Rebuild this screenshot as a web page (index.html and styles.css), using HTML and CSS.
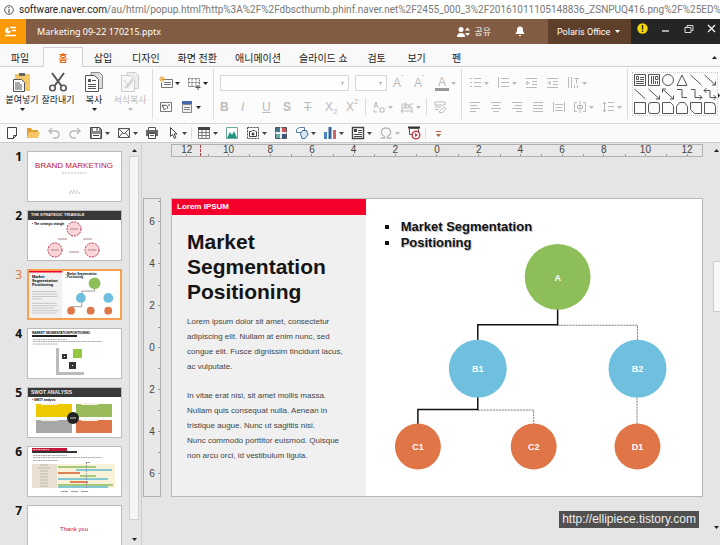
FILE: index.html
```html
<!DOCTYPE html>
<html lang="ko">
<head>
    <meta charset="UTF-8">
    <meta name="viewport" content="width=device-width, initial-scale=1.0">
    <title>Marketing 09-22 170215.pptx</title>
    <link rel="stylesheet" href="styles.css">
</head>
<body>

<svg class="defs" aria-hidden="true">
    <symbol id="caret" viewBox="0 0 5 3"><path d="M0 0h5L2.500 3z" fill="currentColor"/></symbol>

    <!-- clipboard group -->
    <symbol id="paste" viewBox="0 0 20 20"><path d="M3 2h15v17H3z" fill="#f3c768"/><path d="M7 1h6v3H7z" fill="#666"/><path d="M1.500 7.500h8l3 3v9h-11z" fill="#fff" stroke="#555"/><path d="M3 11h5M3 13h7M3 15h7M3 17h7" stroke="#555"/></symbol>
    <symbol id="cut" viewBox="0 0 20 20"><path d="M4 1l9.500 13M16 1L6.500 14" stroke="#555" stroke-width="2" fill="none"/><circle cx="4.500" cy="16" r="2.800" fill="none" stroke="#555" stroke-width="1.600"/><circle cx="15.500" cy="16" r="2.800" fill="none" stroke="#555" stroke-width="1.600"/></symbol>
    <symbol id="copy" viewBox="0 0 20 20"><path d="M7 .500h8.500l3 3v13H7z" fill="#ddd" stroke="#888"/><path d="M1.500 3.500h9l4 4v12h-13z" fill="#fff" stroke="#555"/><path d="M4 7h3v3H4z" fill="#555"/><path d="M8 8.500h4M4 12.500h8M4 14.500h8M4 16.500h8" stroke="#555"/></symbol>
    <symbol id="format-copy" viewBox="0 0 20 20"><path d="M7 .500h8.500l3 3v13H7z" fill="#eee" stroke="#ccc"/><path d="M1.500 3.500h9l4 4v12h-13z" fill="#f7f7f7" stroke="#ccc"/><path d="M4 8l5 6M12 7l-5 6-2 3 4-2 4-6z" fill="#ddd" stroke="#ccc"/></symbol>

    <!-- slide group -->
    <symbol id="new-slide" viewBox="0 0 14 14"><path d="M3.500 3.500h10v8h-11v-5" fill="none" stroke="#777"/><path d="M5 6.500h7M5 8.500h7" stroke="#777"/><path d="M3 0v6M0 3h6M1 1l4 4M5 1L1 5" stroke="#f0a830"/></symbol>
    <symbol id="layout" viewBox="0 0 14 14"><path d="M1.500 2.500h11v8h-11zM1.500 6.500h11M5 2.500v8M9 2.500v8" fill="none" stroke="#777" stroke-dasharray="2 1"/><path d="M11 9v5M8.500 11.500h5" stroke="#555"/></symbol>
    <symbol id="reset" viewBox="0 0 14 14"><path d="M1.500 2.500h11v9h-11z" fill="none" stroke="#777"/><path d="M4 4.500l-1 2 2 1M4 6c3-2 6 0 4 3M9 5h2M4 9h3" fill="none" stroke="#555"/></symbol>
    <symbol id="section" viewBox="0 0 14 14"><path d="M2 1h10v3H2z" fill="#4668a8"/><path d="M2.500 4.500h9v8h-9z" fill="#f0f0f0" stroke="#888"/><path d="M4 7.500h6M4 9.500h6" stroke="#888"/></symbol>

    <!-- shapes gallery -->
    <symbol id="g-text" viewBox="0 0 14 14"><path d="M1.500 1.500h11v11h-11zM3.500 3.500h2v3h-2zM7 4.500h4M7 6.500h4M3 8.500h8M3 10.500h8"/></symbol>
    <symbol id="g-vtext" viewBox="0 0 14 14"><path d="M1.500 1.500h11v11h-11zM4.500 3v8M6.500 3v8M8.500 8v3M8.500 3.500h2.500v3H8.500zM10.500 8v3"/></symbol>
    <symbol id="g-circle" viewBox="0 0 14 14"><circle cx="7" cy="7" r="5.500"/></symbol>
    <symbol id="g-triangle" viewBox="0 0 14 14"><path d="M7 2l5 10.500H2z"/></symbol>
    <symbol id="g-line" viewBox="0 0 14 14"><path d="M1.500 2l11 10"/></symbol>
    <symbol id="g-arrow" viewBox="0 0 14 14"><path d="M1.500 2l11 10M12.500 8.500V12H9"/></symbol>
    <symbol id="g-arrow2" viewBox="0 0 14 14"><path d="M1.500 2l11 10M12.500 8.500V12H9M1.500 5.500V2H5"/></symbol>
    <symbol id="g-elbow" viewBox="0 0 14 14"><path d="M2 2.500h5v8h5"/></symbol>
    <symbol id="g-elbow-a" viewBox="0 0 14 14"><path d="M2 2.500h4v8h7M10.500 8l2.500 2.500-2.500 2.500"/></symbol>
    <symbol id="g-elbow-b" viewBox="0 0 14 14"><path d="M1 3.500h6v7h6M10.500 8l2.500 2.500-2.500 2.500M3.500 1L1 3.500 3.500 6"/></symbol>
    <symbol id="g-rect" viewBox="0 0 14 14"><path d="M1.500 1.500h11v11h-11z"/></symbol>
    <symbol id="g-round" viewBox="0 0 14 14"><rect x="1.500" y="1.500" width="11" height="11" rx="2.500"/></symbol>
    <symbol id="g-snip" viewBox="0 0 14 14"><path d="M1.500 1.500h8l3 3v8h-11z"/></symbol>
    <symbol id="g-snip2" viewBox="0 0 14 14"><path d="M4.500 1.500h5l3 4v7h-11v-7z"/></symbol>
    <symbol id="g-snip3" viewBox="0 0 14 14"><path d="M1.500 1.500h11v11h-7l-4-4z"/></symbol>
    <symbol id="g-round1" viewBox="0 0 14 14"><path d="M1.500 1.500h7q4 0 4 4v7h-11z"/></symbol>
</svg>

<div class="address">
    <svg class="info" viewBox="0 0 10 10"><circle cx="5" cy="5" r="4.300" fill="none" stroke="#555"/><path d="M5 2v1.200M5 4.200V8" stroke="#555" stroke-width="1.200"/></svg>
    <span class="url"><b>software.naver.com</b>/au/html/popup.html?http%3A%2F%2Fdbscthumb.phinf.naver.net%2F2455_000_3%2F20161011105148836_ZSNPUQ416.png%2F%25ED%</span>
</div>

<header class="titlebar">
    <button class="app" aria-label="Menu">
        <svg width="13" height="12" viewBox="0 0 13 12"><path d="M4.500 1.500A3 3 0 1 0 7 5H4.500z" fill="#fff"/><path d="M6 1.500h6M8 4.500h4M1 9.500h11" stroke="#fff" stroke-width="1.500"/></svg>
    </button>
    <h1 class="filename">Marketing 09-22 170215.pptx</h1>
    <button class="share">
        <svg width="13" height="12" viewBox="0 0 13 12"><circle cx="4" cy="3.500" r="2.500" fill="#fff"/><path d="M0 11q0-4 4-4t4 4z" fill="#fff"/><path d="M8 4.500h5L10.500 1.500zM8 7h5l-2.500 3z" fill="#fff"/></svg>
        공유
    </button>
    <button class="bell" aria-label="Notifications">
        <svg width="10" height="11" viewBox="0 0 10 11"><path d="M5 .500c3 0 3 2.500 3 4.500l1.500 3h-9L2 5C2 3 2 .500 5 .500zM3.500 9h3L5 10.500z" fill="#fff"/></svg>
    </button>
    <button class="account">Polaris Office <svg class="caret"><use href="#caret"/></svg></button>
    <div class="window-buttons">
        <button aria-label="Alert"><svg width="11" height="11" viewBox="0 0 11 11"><circle cx="5.500" cy="5.500" r="5.200" fill="#f5d800"/><path d="M5.500 2v4.500M5.500 7.500V9" stroke="#222" stroke-width="1.400"/></svg></button>
        <button aria-label="Minimize"><svg width="11" height="11" viewBox="0 0 11 11"><path d="M2 8h7" stroke="#fff" stroke-width="1.200"/></svg></button>
        <button aria-label="Restore"><svg width="11" height="11" viewBox="0 0 11 11"><path d="M2 4.500h6v5H2zM4 4V2.500h6v5H8.500" stroke="#ddd" fill="none"/></svg></button>
        <button aria-label="Close"><svg width="11" height="11" viewBox="0 0 11 11"><path d="M2 2l7 7M9 2L2 9" stroke="#fff" stroke-width="1.200"/></svg></button>
    </div>
</header>

<nav class="tabs">
    <button>파일</button>
    <button class="active">홈</button>
    <button>삽입</button>
    <button>디자인</button>
    <button>화면 전환</button>
    <button>애니메이션</button>
    <button>슬라이드 쇼</button>
    <button>검토</button>
    <button>보기</button>
    <button>펜</button>
    <button class="collapse" aria-label="Collapse"><svg class="caret up"><use href="#caret"/></svg></button>
</nav>

<section class="ribbon">
    <div class="group clipboard">
        <button class="big"><svg><use href="#paste"/></svg><span>붙여넣기</span><svg class="caret"><use href="#caret"/></svg></button>
        <button class="big"><svg><use href="#cut"/></svg><span>잘라내기</span></button>
        <button class="big"><svg><use href="#copy"/></svg><span>복사</span><svg class="caret"><use href="#caret"/></svg></button>
        <button class="big" disabled><svg><use href="#format-copy"/></svg><span>서식복사</span><svg class="caret"><use href="#caret"/></svg></button>
    </div>

    <div class="group">
        <div class="row">
            <button class="tool split" aria-label="New slide"><svg><use href="#new-slide"/></svg><svg class="caret"><use href="#caret"/></svg></button>
            <button class="tool split" aria-label="Layout"><svg><use href="#layout"/></svg><svg class="caret"><use href="#caret"/></svg></button>
        </div>
        <div class="row">
            <button class="tool" aria-label="Reset"><svg><use href="#reset"/></svg></button>
            <button class="tool split" aria-label="Section"><svg><use href="#section"/></svg><svg class="caret"><use href="#caret"/></svg></button>
        </div>
    </div>

    <div class="group font">
        <div class="row">
            <select class="font-name" aria-label="Font" disabled></select>
            <select class="font-size" aria-label="Font size" disabled></select>
            <button class="tool" disabled>A<sup>ˆ</sup></button>
            <button class="tool" disabled>A<sup>ˇ</sup></button>
            <button class="tool split" disabled><span class="font-color">A</span><svg class="caret"><use href="#caret"/></svg></button>
        </div>
        <div class="row">
            <button class="tool" disabled><b>B</b></button>
            <button class="tool" disabled><i>I</i></button>
            <button class="tool" disabled><u>U</u></button>
            <button class="tool" disabled><b>S</b></button>
            <button class="tool" disabled><s>T</s></button>
            <button class="tool" disabled>X<sub>2</sub></button>
            <button class="tool" disabled>X<sup>2</sup></button>
            <span class="divider"></span>
            <button class="tool split" aria-label="Text direction" disabled><svg viewBox="0 0 14 14"><path d="M2 8l2-6 2 6M3 6h2M8 8v4h4V8zM2 10v2h3" fill="none" stroke="currentColor"/></svg><svg class="caret"><use href="#caret"/></svg></button>
            <button class="tool split" aria-label="Spacing" disabled><svg viewBox="0 0 14 14"><path d="M2 4h3v4H2zM6 2v6h3V5H6M13 4h-3v4h3M1 11h12M3 9l-2 2 2 2M11 9l2 2-2 2" fill="none" stroke="currentColor"/></svg><svg class="caret"><use href="#caret"/></svg></button>
            <span class="divider"></span>
            <button class="tool" aria-label="Clear format" disabled><svg viewBox="0 0 14 14"><path d="M2 2h10v3H2zM2 7h6M2 9.500h4M6 12l5-5 2 2-4 4z" fill="none" stroke="currentColor"/></svg></button>
        </div>
    </div>

    <div class="group">
        <div class="row">
            <button class="tool split" aria-label="Bullets" disabled><svg viewBox="0 0 14 14"><path d="M2 2.500h2M2 6.500h2M2 10.500h2M6 2.500h7M6 6.500h7M6 10.500h7" stroke="currentColor"/></svg><svg class="caret"><use href="#caret"/></svg></button>
            <button class="tool split" aria-label="Numbering" disabled><svg viewBox="0 0 14 14"><path d="M2.500 1v11M5 2.500h8M5 6.500h8M5 10.500h8" stroke="currentColor"/></svg><svg class="caret"><use href="#caret"/></svg></button>
            <button class="tool" aria-label="Outdent" disabled><svg viewBox="0 0 14 14"><path d="M2 2.500h11M8 5.500h5M8 8.500h5M2 11.500h11M6 7H2l2-2M2 7l2 2" fill="none" stroke="currentColor"/></svg></button>
            <button class="tool" aria-label="Indent" disabled><svg viewBox="0 0 14 14"><path d="M2 2.500h11M8 5.500h5M8 8.500h5M2 11.500h11M2 7h4L4 5M6 7L4 9" fill="none" stroke="currentColor"/></svg></button>
            <button class="tool split" aria-label="Vertical text" disabled><svg viewBox="0 0 14 14"><path d="M2.500 1v11M5.500 1v11M8 2.500h5M10.500 2.500v5M8.500 9v3M11.500 9v3" stroke="currentColor"/></svg><svg class="caret"><use href="#caret"/></svg></button>
        </div>
        <div class="row">
            <button class="tool" aria-label="Align left" disabled><svg viewBox="0 0 14 14"><path d="M2 2.500h10M2 5.500h7M2 8.500h10M2 11.500h6" stroke="currentColor"/></svg></button>
            <button class="tool" aria-label="Align center" disabled><svg viewBox="0 0 14 14"><path d="M2 2.500h10M4 5.500h6M2 8.500h10M4 11.500h6" stroke="currentColor"/></svg></button>
            <button class="tool" aria-label="Align right" disabled><svg viewBox="0 0 14 14"><path d="M2 2.500h10M5 5.500h7M2 8.500h10M6 11.500h6" stroke="currentColor"/></svg></button>
            <button class="tool" aria-label="Justify" disabled><svg viewBox="0 0 14 14"><path d="M2 2.500h10M2 5.500h10M2 8.500h10M2 11.500h10" stroke="currentColor"/></svg></button>
            <button class="tool" aria-label="Distribute" disabled><svg viewBox="0 0 14 14"><path d="M1.500 2v10M12.500 2v10M3 4.500h8M3 10.500h8M4 7.500h6" stroke="currentColor"/></svg></button>
            <button class="tool split" aria-label="Text box align" disabled><svg viewBox="0 0 14 14"><path d="M4 2.500H1.500v9H4M10 2.500h2.500v9H10M7 1v12M4.500 5.500h5v3h-5z" fill="none" stroke="currentColor"/></svg><svg class="caret"><use href="#caret"/></svg></button>
            <button class="tool split" aria-label="Line spacing" disabled><svg viewBox="0 0 14 14"><path d="M3.500 2v10M2 4l1.500-2L5 4M2 10l1.500 2L5 10M7 2.500h6M7 6.500h6M7 10.500h6" fill="none" stroke="currentColor"/></svg><svg class="caret"><use href="#caret"/></svg></button>
        </div>
    </div>

    <div class="gallery">
        <svg><use href="#g-text"/></svg><svg><use href="#g-vtext"/></svg><svg><use href="#g-circle"/></svg><svg><use href="#g-triangle"/></svg><svg><use href="#g-line"/></svg><svg><use href="#g-arrow"/></svg>
        <svg><use href="#g-line"/></svg><svg><use href="#g-arrow"/></svg><svg><use href="#g-arrow2"/></svg><svg><use href="#g-elbow"/></svg><svg><use href="#g-elbow-a"/></svg><svg><use href="#g-elbow-b"/></svg>
        <svg><use href="#g-rect"/></svg><svg><use href="#g-round"/></svg><svg><use href="#g-snip"/></svg><svg><use href="#g-snip2"/></svg><svg><use href="#g-snip3"/></svg><svg><use href="#g-round1"/></svg>
    </div>
    <button class="more" aria-label="More"><svg width="2" height="5" viewBox="0 0 2 5"><path d="M0 0v5l2-2.500z" fill="#222"/></svg></button>
</section>

<section class="quickbar">
    <button class="tool" aria-label="New"><svg viewBox="0 0 14 14"><path d="M2.500 1.500h9v8l-3 3h-6zM11.500 9.500h-3v3" fill="#fff" stroke="#444"/></svg></button>
    <button class="tool" aria-label="Open"><svg viewBox="0 0 14 14"><path d="M1 2h4l1 2h6v8H1z" fill="#e0a030"/><path d="M3 6h11l-2 6H1z" fill="#f7c566"/></svg></button>
    <button class="tool" aria-label="Undo" disabled><svg viewBox="0 0 14 14"><path d="M5 2L2 5l3 3M2 5h6q4 0 4 3.500T8 12H6" fill="none" stroke="currentColor" stroke-width="1.400"/></svg></button>
    <button class="tool" aria-label="Redo" disabled><svg viewBox="0 0 14 14"><path d="M9 2l3 3-3 3M12 5H6Q2 5 2 8.500T6 12h2" fill="none" stroke="currentColor" stroke-width="1.400"/></svg></button>
    <button class="tool split" aria-label="Save"><svg viewBox="0 0 14 14"><path d="M1.500 1.500h9l2 2v9h-11z" fill="#888" stroke="#444"/><path d="M4 2h6v3H4zM3 8h8v4H3z" fill="#fff"/><path d="M4 9.500h6M8 2v3" stroke="#444"/></svg><svg class="caret"><use href="#caret"/></svg></button>
    <button class="tool split" aria-label="Mail"><svg viewBox="0 0 14 14"><path d="M1.500 2.500h11v9h-11zM2 3l5 5 5-5M2 11l3.500-4M12 11L8.500 7" fill="none" stroke="#555"/></svg><svg class="caret"><use href="#caret"/></svg></button>
    <button class="tool" aria-label="Print"><svg viewBox="0 0 14 14"><path d="M3.500 1.500h7v3h-7z" fill="#fff" stroke="#555"/><path d="M1 4h12v6H1z" fill="#666"/><path d="M3.500 7.500h7v5h-7z" fill="#fff" stroke="#444"/><path d="M5 9.500h4" stroke="#555"/></svg></button>
    <button class="tool split" aria-label="Select"><svg viewBox="0 0 14 14"><path d="M4.500 1.500v9l2-2 2 4 1.500-1-2-3.500H11z" fill="#fff" stroke="#444"/></svg><svg class="caret"><use href="#caret"/></svg></button>
    <span class="divider"></span>
    <button class="tool split" aria-label="Table"><svg viewBox="0 0 14 14"><path d="M1.500 1.500h11v11h-11zM1.500 6.500h11M1.500 9.500h11M5 3v9M9 3v9" fill="#fff" stroke="#777"/><path d="M1 1h12v3H1z" fill="#444"/></svg><svg class="caret"><use href="#caret"/></svg></button>
    <button class="tool" aria-label="Picture"><svg viewBox="0 0 14 14"><path d="M1.500 1.500h11v11h-11z" fill="#fff" stroke="#70a8a0"/><path d="M2 12l3-6 2 3 2-4 3 7z" fill="#1f9480"/></svg></button>
    <button class="tool split" aria-label="Screenshot"><svg viewBox="0 0 14 14"><path d="M1.500 1.500h11v11h-11z" fill="none" stroke="#444" stroke-dasharray="2 1"/><path d="M3.500 5.500h2l1-1h2l1 1h1v5h-7z" fill="#fff" stroke="#444"/><circle cx="7" cy="8" r="1.500" fill="#444"/></svg><svg class="caret"><use href="#caret"/></svg></button>
    <button class="tool" aria-label="Clip art"><svg viewBox="0 0 14 14"><path d="M1.500 1.500h11v11h-11z" fill="#ddd" stroke="#555"/><path d="M2 2h4v4H2z" fill="#478"/><path d="M8 2h4v4H8z" fill="#c55"/><path d="M2 8h4v4H2z" fill="#6aa"/><path d="M8 8h4v4H8z" fill="#358"/><path d="M1 7h12M7 1v12" stroke="#fff"/></svg></button>
    <button class="tool split" aria-label="Shapes"><svg viewBox="0 0 14 14"><path d="M1.500 3.500l3-2h5v5h-8z" fill="#fff" stroke="#5680a8"/><path d="M5.500 7.500l2-3h4l1.500 4-3 4H7z" fill="#d8e8f4" stroke="#3c6c9c"/></svg><svg class="caret"><use href="#caret"/></svg></button>
    <button class="tool split" aria-label="Chart"><svg viewBox="0 0 14 14"><path d="M1 6h3v7H1z" fill="#48b"/><path d="M5.500 1h3v12h-3z" fill="#369"/><path d="M10 4h3v9h-3z" fill="#c66"/></svg><svg class="caret"><use href="#caret"/></svg></button>
    <button class="tool split" aria-label="Text box"><svg viewBox="0 0 14 14"><path d="M1.500 1.500h11v11h-11z" fill="#fff" stroke="#444" stroke-width="1.400"/><path d="M3 3h3v3H3z" fill="#444"/><path d="M7 4.500h4M7 6.500h4M3 8.500h8M3 10.500h8" stroke="#444"/></svg><svg class="caret"><use href="#caret"/></svg></button>
    <button class="tool split" aria-label="Symbol" disabled><svg viewBox="0 0 14 14"><path d="M1.500 12h4v-1.500C0 7 2.500 2 7 2s7 5 1.500 8.500V12h4" fill="none" stroke="currentColor" stroke-width="1.400"/></svg><svg class="caret"><use href="#caret"/></svg></button>
    <button class="tool" aria-label="Slide show"><svg viewBox="0 0 14 14"><path d="M1 1.500h12" stroke="#333" stroke-width="2"/><path d="M2.500 2.500h9v6h-9zM5 12l2-3" fill="#fff" stroke="#555"/><circle cx="9" cy="9" r="3.800" fill="#fff" stroke="#c23a4a" stroke-width="1.400"/><path d="M8 7l3 2-3 2z" fill="#c23a4a"/></svg></button>
    <span class="divider"></span>
    <button class="tool" aria-label="Customize"><svg viewBox="0 0 14 14"><path d="M5 5.500h5" stroke="#c55"/><path d="M5 8h5l-2.500 3z" fill="#a63"/></svg></button>
</section>

<main class="workspace">
    <aside class="slides">
        <ol class="thumbs">
            <li>
                <span>1</span>
                <svg viewBox="0 0 93 51" preserveAspectRatio="xMidYMid slice">
                    <text x="46" y="17" font-size="8" text-anchor="middle" fill="#c0143c">BRAND MARKETING</text>
                    <path d="M34 22h25M42 40h9M41 42h11" stroke="#bbb" stroke-dasharray="2 1"/>
                </svg>
            </li>
            <li>
                <span>2</span>
                <svg viewBox="0 0 93 51" preserveAspectRatio="xMidYMid slice">
                    <path d="M0 0h93v10H0z" fill="#383838"/>
                    <text x="3" y="6" font-size="4" font-weight="bold" fill="#eee">THE STRATEGIC TRIANGLE</text>
                    <text x="4" y="15" font-size="3" font-weight="bold">•  The strategic triangle</text>
                    <g fill="#fbd5d8" stroke="#b8324c" stroke-dasharray="2 1"><circle cx="46" cy="19" r="7"/><circle cx="27" cy="40" r="7"/><circle cx="64" cy="40" r="7"/></g>
                    <path d="M30 29h9M55 29h9M41 42h10M42 19h8M23 40h8M60 40h8" stroke="#a88"/>
                </svg>
            </li>
            <li class="selected">
                <span>3</span>
                <svg viewBox="0 0 93 51" preserveAspectRatio="xMidYMid slice">
                    <path d="M0 0h34v51H0z" fill="#f0f0f0"/><path d="M0 0h34v3H0z" fill="#f5002d"/>
                    <g font-size="4" font-weight="bold"><text x="3" y="9">Market</text><text x="3" y="13">Segmentation</text><text x="3" y="17">Positioning</text></g>
                    <path d="M3 22.500h25M3 25h26M3 27.500h26M3 30h10M3 34.500h25M3 37h26M3 39.500h23M3 42h27M3 44.500h25" stroke="#bbb" stroke-width=".800"/>
                    <g font-size="3" font-weight="bold"><text x="37" y="6">▪ Market Segmentation</text><text x="37" y="9">▪ Positioning</text></g>
                    <path d="M67 18v4H54v16H43v4" fill="none" stroke="#999"/>
                    <circle cx="67" cy="14" r="6" fill="#8dbe5a"/>
                    <g fill="#6ec0de"><circle cx="53" cy="29" r="5"/><circle cx="81" cy="29" r="5"/></g>
                    <g fill="#e07648"><circle cx="43" cy="42" r="4"/><circle cx="63" cy="42" r="4"/><circle cx="81" cy="42" r="4"/></g>
                </svg>
            </li>
            <li>
                <span>4</span>
                <svg viewBox="0 0 93 51" preserveAspectRatio="xMidYMid slice">
                    <text x="4" y="6" font-size="3" font-weight="bold">MARKET SEGMENTATION/POSITIONING</text>
                    <path d="M4 7h45v2H4z" fill="#222"/>
                    <path d="M5 11.500h34M5 13.500h69M5 16h25" stroke="#999" stroke-width=".800" stroke-dasharray="2 .500"/>
                    <path d="M28 20h3v24h25v3H28z" fill="#bbb"/><path d="M45 21h9v9h-9z" fill="#94c840"/><path d="M34 26h5v5h-5zM41 34h7v7h-7z" fill="#333"/><path d="M36 28.500h1M44 37.500h1" stroke="#fff"/>
                </svg>
            </li>
            <li>
                <span>5</span>
                <svg viewBox="0 0 93 51" preserveAspectRatio="xMidYMid slice">
                    <path d="M0 0h93v10H0z" fill="#383838"/>
                    <text x="3" y="7" font-size="5" font-weight="bold" fill="#eee">SWOT ANALYSIS</text>
                    <text x="4" y="14" font-size="3" font-weight="bold">•  SWOT analysis</text>
                    <path d="M8 17h36v13H8z" fill="#eec900"/><path d="M48 17h36v13H48z" fill="#9abb59"/><path d="M8 33h36v13H8z" fill="#a5a7a9"/><path d="M48 33h36v13H48z" fill="#de7548"/>
                    <path d="M13 16h17v2H13zM53 16h17v2H53zM13 32h17v2H13zM53 32h17v2H53z" fill="#f5f0e4"/>
                    <circle cx="45" cy="31" r="6" fill="#222"/><path d="M42 31h6" stroke="#ccc"/>
                </svg>
            </li>
            <li>
                <span>6</span>
                <svg viewBox="0 0 93 51" preserveAspectRatio="xMidYMid slice">
                    <path d="M4 2h35v3H4z" fill="#c4163c"/><path d="M4 5h45v2H4z" fill="#333"/><path d="M5 3.500h16" stroke="#eaa" stroke-dasharray="2 .500"/>
                    <path d="M5 9.500h34M5 11.500h69M5 14.500h25" stroke="#999" stroke-width=".800" stroke-dasharray="2 .500"/>
                    <path d="M4 18h25v24H4z" fill="#e9e0d2"/><path d="M29 18h58v24H29z" fill="#f8f2d8"/>
                    <path d="M12 19h8M10 22h12M12 25h8M12 28h8M12 31h8M12 34h8M12 37h8M12 40h8" stroke="#bba"/>
                    <path d="M30 21h38M52 30h16M30 39h55" stroke="#a5c979" stroke-width="2"/>
                    <path d="M48 24h36M30 33h50M30 41h50" stroke="#85c8d4" stroke-width="2"/>
                    <path d="M30 27h22M42 36h18" stroke="#de8058" stroke-width="2"/>
                    <path d="M33 45.500h7M43 45.500h7M53 45.500h7M58 16.500h4" stroke="#a99"/><path d="M58.500 17v25" stroke="#889" stroke-dasharray="1 1"/>
                </svg>
            </li>
            <li>
                <span>7</span>
                <svg viewBox="0 0 93 51" preserveAspectRatio="xMidYMid slice"><text x="46" y="26" font-size="6" text-anchor="middle" fill="#c0143c">Thank you</text></svg>
            </li>
        </ol>
        <div class="scrollbar">
            <svg class="caret up"><use href="#caret"/></svg>
            <div class="handle"></div>
            <svg class="caret"><use href="#caret"/></svg>
        </div>
    </aside>

    <div class="editor">
        <div class="ruler horizontal">
            <span>12</span><span>10</span><span>8</span><span>6</span><span>4</span><span>2</span><span>0</span><span>2</span><span>4</span><span>6</span><span>8</span><span>10</span><span>12</span>
            <i class="marker"></i>
        </div>
        <div class="ruler vertical">
            <span>6</span><span>4</span><span>2</span><span>0</span><span>2</span><span>4</span><span>6</span>
        </div>
        <article class="slide">
            <div class="slide-text">
                <div class="strip">Lorem IPSUM</div>
                <h2>Market Segmentation Positioning</h2>
                <p>Lorem ipsum dolor sit amet, consectetur<br>adipiscing elit. Nullam at enim nunc, sed<br>congue elit. Fusce dignissim tincidunt lacus,<br>ac vulputate.</p>
                <p>In vitae erat nisi, sit amet mollis massa.<br>Nullam quis consequat nulla. Aenean in<br>tristique augue. Nunc ut sagittis nisi.<br>Nunc commodo porttitor euismod. Quisque<br>non arcu orci, id vestibulum ligula.</p>
            </div>
            <div class="slide-diagram">
                <svg class="diagram" viewBox="0 0 337 299">
                    <g fill="none" stroke="#777" stroke-dasharray="2 1">
                        <path d="M192 126.500h80v16M112 211.500h56v15M271.500 196v30"/>
                    </g>
                    <g fill="none" stroke="#111" stroke-width="1.500">
                        <path d="M192 110v16h-80v18M112 197v14H52v16"/>
                    </g>
                    <circle cx="192" cy="78" r="33" fill="#8dbe5a"/>
                    <circle cx="112" cy="170" r="29" fill="#6ec0de"/>
                    <circle cx="272" cy="170" r="29" fill="#6ec0de"/>
                    <circle cx="52" cy="248" r="23" fill="#e07648"/>
                    <circle cx="168" cy="248" r="23" fill="#e07648"/>
                    <circle cx="272" cy="248" r="23" fill="#e07648"/>
                    <g class="node-labels">
                        <text x="192" y="82">A</text><text x="112" y="173">B1</text><text x="272" y="173">B2</text>
                        <text x="52" y="251">C1</text><text x="168" y="251">C2</text><text x="272" y="251">D1</text>
                    </g>
                </svg>
                <ul>
                    <li>Market Segmentation</li>
                    <li>Positioning</li>
                </ul>
            </div>
        </article>
        <a class="watermark" href="http://ellipiece.tistory.com">http://ellipiece.tistory.com</a>
    </div>
    <div class="page-scroll">
        <svg class="caret up"><use href="#caret"/></svg>
        <div class="handle"></div>
        <svg class="caret"><use href="#caret"/></svg>
    </div>
</main>

</body>
</html>
```

FILE: styles.css
```css
* {
    box-sizing: border-box;
}
body {
    margin: 0;
    height: 100vh;
    display: flex;
    flex-direction: column;
    overflow: hidden;
    background: #e5e5e5;
    color: #222;
    font-family: "Noto Sans", "Noto Sans CJK KR", sans-serif;
    font-size: 10px;
}
button {
    display: flex;
    align-items: center;
    flex-shrink: 0;
    padding: 0;
    border: 0;
    background: none;
    color: inherit;
    font: inherit;
    white-space: nowrap;
}
.defs {
    position: absolute;
    width: 0;
    height: 0;
}
.caret {
    width: 5px;
    height: 3px;
    flex-shrink: 0;
}
.up {
    transform: rotate(180deg);
}

/* address line */
.address {
    display: flex;
    align-items: center;
    gap: 5px;
    height: 19px;
    padding-left: 4px;
    background: #fff;
    color: #777;
    font-family: Roboto, sans-serif;
    flex-shrink: 0;
}
.info {
    width: 10px;
    height: 10px;
    flex-shrink: 0;
}
.url {
    white-space: nowrap;
}
.url b {
    font-weight: normal;
    color: #222;
}

/* title bar */
.titlebar {
    display: flex;
    height: 25px;
    flex-shrink: 0;
    background: #835d43;
    color: #fff;
}
.app {
    width: 26px;
    padding-left: 4px;
    background: #fb9a09;
}
.filename {
    flex: 1;
    margin: 0;
    padding-left: 11px;
    font-size: 9px;
    line-height: 25px;
    font-weight: normal;
}
.share {
    gap: 4px;
    padding-right: 24px;
    font-size: 9px;
}
.bell {
    padding-right: 23px;
}
.account {
    width: 83px;
    padding-left: 9px;
    gap: 5px;
    background: #5d3f2a;
    font-family: Roboto, sans-serif;
    font-size: 9px;
}
.window-buttons {
    display: flex;
    justify-content: space-between;
    width: 89px;
    padding: 0 3px 7px 6px;
    background: #252525;
}

/* tabs */
.tabs {
    display: flex;
    height: 23px;
    flex-shrink: 0;
    padding-top: 3px;
    background: #f9f9f9;
    border-bottom: 1px solid #d0d0d0;
}
.tabs button {
    justify-content: center;
    min-width: 40px;
    height: 20px;
    padding: 0 9px;
}
.tabs .active {
    margin: 0 0 0 3px;
    background: #fcfcfc;
    border: 1px solid #d0d0d0;
    border-bottom: 0;
    color: #e07020;
    font-weight: bold;
}
.tabs .collapse {
    min-width: 10px;
    margin-left: auto;
    padding: 0 3px;
}

/* ribbon */
.ribbon {
    display: flex;
    height: 57px;
    flex-shrink: 0;
    padding-top: 2px;
    background: #fcfcfc;
    border-bottom: 1px solid #d8d8d8;
}
.group {
    height: 50px;
    padding: 2px;
    border-right: 1px solid #ddd;
    flex-shrink: 0;
}
.clipboard {
    display: flex;
    padding: 3px 4px;
}
.big {
    flex-direction: column;
    width: 36px;
    font-size: 9px;
}
.big svg:first-child {
    width: 20px;
    height: 20px;
    flex-shrink: 0;
}
.big span {
    line-height: 16px;
}
.row {
    display: flex;
    align-items: center;
    height: 24px;
}
.tool {
    gap: 2px;
    width: 21px;
    height: 18px;
    padding-left: 4px;
}
.split {
    width: 28px;
}
.tool svg:first-child {
    width: 14px;
    height: 14px;
    flex-shrink: 0;
}
button:disabled {
    color: #bbb;
}
.font .tool {
    font-family: "Liberation Sans", sans-serif;
    font-size: 12px;
    gap: 0;
}
.font .split {
    gap: 2px;
}
.font sup, .font sub {
    font-size: 8px;
    line-height: 8px;
}
.font sup {
    align-self: flex-start;
}
.font sub {
    align-self: flex-end;
}
.font-color {
    width: 14px;
    line-height: 12px;
    text-align: center;
    border-bottom: 3px solid #999;
}
.font select {
    appearance: none;
    height: 16px;
    margin: 0 2px 0 4px;
    border: 1px solid #c8c8c8;
    border-radius: 0;
    background: #fff conic-gradient(from -32deg at 50% 100%, #999 64deg, transparent 0) right 3px center / 5px 3px no-repeat;
}
.font .font-name {
    width: 129px;
}
.font .font-size {
    width: 32px;
}
.divider {
    width: 1px;
    height: 12px;
    margin: 0 1px;
    background: #ddd;
}
.font .divider {
    height: 18px;
    margin: 0 2px;
}
.gallery {
    display: grid;
    grid-template-columns: repeat(6, 14px);
    grid-template-rows: repeat(3, 14px);
    height: 44px;
    margin: 3px 0 0 4px;
    border: 1px dotted #ccc;
    flex-shrink: 0;
}
.gallery svg {
    width: 14px;
    height: 14px;
    fill: none;
    stroke: #555;
}
.more {
    margin-left: auto;
    padding-bottom: 2px;
}

/* quick access bar */
.quickbar {
    display: flex;
    align-items: center;
    height: 19px;
    flex-shrink: 0;
    padding-left: 1px;
    background: #fafafa;
    border-bottom: 1px solid #c8c8c8;
    color: #444;
}

/* workspace */
.workspace {
    display: flex;
    flex: 1;
    min-height: 0;
}
.slides {
    display: flex;
    justify-content: space-between;
    width: 142px;
    flex-shrink: 0;
    padding-right: 2px;
    border-right: 1px solid #ccc;
}
.thumbs {
    display: flex;
    flex-direction: column;
    gap: 8px;
    margin: 0;
    padding: 8px 0 0 0;
    list-style: none;
}
.thumbs li {
    display: flex;
    gap: 5px;
}
.thumbs span {
    width: 22px;
    text-align: right;
    font-size: 12px;
    line-height: 12px;
    font-weight: bold;
    color: #111;
}
.thumbs svg {
    width: 95px;
    height: 51px;
    background: #fff;
    border: 1px solid #bbb;
    font-family: "Liberation Sans", sans-serif;
}
.thumbs .selected span {
    color: #d88040;
    font-weight: normal;
}
.thumbs .selected svg {
    border: 2px solid #f8a050;
}
.scrollbar {
    display: flex;
    flex-direction: column;
    align-items: center;
    gap: 4px;
    width: 10px;
    padding: 6px 0 4px;
}
.scrollbar .handle {
    width: 10px;
    height: 364px;
    background: #f5f5f5;
    border: 1px solid #d0d0d0;
}
.scrollbar .caret:last-child {
    margin-top: auto;
}
.editor {
    display: grid;
    grid-template-columns: 18px 1fr;
    grid-template-rows: 13px auto 1fr;
    gap: 41px 10px;
    flex: 1;
    padding: 1px 10px 0 1px;
    position: relative;
}
.ruler {
    display: flex;
    border: 1px solid #b0b0b0;
    background: #e8e8e8;
    color: #444;
    font-family: "Liberation Sans", sans-serif;
    overflow: hidden;
    position: relative;
}
.ruler span {
    flex: 1;
    text-align: center;
}
.horizontal {
    grid-column: 2;
}
.horizontal span {
    line-height: 10px;
    background: linear-gradient(#999, #999) center bottom / 1px 2px no-repeat, linear-gradient(#999, #999) left bottom / 1px 2px no-repeat;
}
.horizontal span:first-of-type {
    margin-left: -6px;
}
.horizontal span:last-of-type {
    margin-right: -6px;
}
.marker {
    position: absolute;
    left: 28px;
    top: 0;
    height: 100%;
    border-left: 1px dashed #b04040;
}
.vertical {
    flex-direction: column;
    padding: 2px 0;
}
.vertical span {
    display: flex;
    align-items: center;
    justify-content: center;
    background: linear-gradient(#999, #999) right center / 2px 1px no-repeat, linear-gradient(#999, #999) right top / 2px 1px no-repeat;
}
.slide {
    display: flex;
    aspect-ratio: 532 / 299;
    background: #fff;
    border: 1px solid #b8b8b8;
    font-family: "Liberation Sans", sans-serif;
}
.slide-text {
    flex: 194;
    background: #f0f0f0;
}
.strip {
    padding-left: 5px;
    background: #f5002d;
    color: #fff;
    font-size: 8px;
    line-height: 16px;
    font-weight: bold;
}
.slide h2 {
    margin: 14px 15px 10px;
    font-size: 21px;
    line-height: 25px;
    color: #151515;
}
.slide p {
    margin: 0 0 14px 15px;
    font-size: 8px;
    line-height: 15px;
    color: #444;
    white-space: nowrap;
}
.slide-diagram {
    display: grid;
    flex: 337;
}
.slide-diagram > * {
    grid-area: 1 / 1;
}
.diagram {
    width: 100%;
}
.node-labels {
    fill: #fff;
    font-size: 9px;
    font-weight: bold;
    text-anchor: middle;
}
.slide ul {
    margin: 20px 0 0 19px;
    padding: 0;
    list-style: none;
    font-size: 13px;
    line-height: 16px;
    font-weight: bold;
    color: #111;
    text-shadow: 1px 1px 1px #bbb;
}
.slide li {
    display: flex;
    align-items: center;
    gap: 12px;
}
.slide li::before {
    content: "";
    width: 4px;
    height: 4px;
    background: #111;
}
.watermark {
    position: absolute;
    right: 14px;
    bottom: 17px;
    padding: 0 3px;
    background: #505050;
    color: #eee;
    font-family: "Liberation Sans", sans-serif;
    font-size: 12px;
    line-height: 17px;
    text-decoration: none;
}
.page-scroll {
    display: flex;
    flex-direction: column;
    align-items: center;
    justify-content: space-between;
    width: 7px;
    padding: 6px 0 16px;
}
.page-scroll .handle {
    width: 7px;
    height: 51px;
    margin-bottom: 106px;
    background: #f8f8f8;
    border: 1px solid #ccc;
    border-right: 0;
}
```
